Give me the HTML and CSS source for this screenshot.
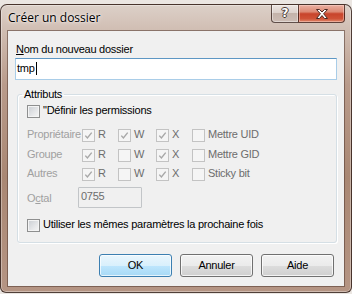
FILE: index.html
```html
<!DOCTYPE html>
<html lang="fr">
<head>
<meta charset="utf-8">
<title>Créer un dossier</title>
<link rel="stylesheet" href="styles.css">
</head>
<body>
<div class="window">
  <div class="titlebar">
    <span class="title">Créer un dossier</span>
    <div class="caption">
      <span class="cap cap-help">?</span>
      <span class="cap cap-close"><svg width="12" height="10" viewBox="0 0 12 10"><polygon points="0.5,0.5 3.5,0.5 6,3 8.5,0.5 11.5,0.5 7.6,4.75 11.5,9.5 8.5,9.5 6,6.6 3.5,9.5 0.5,9.5 4.4,4.75" fill="#fff" stroke="#4a2a24" stroke-width="1" stroke-linejoin="round"/></svg></span>
    </div>
  </div>
  <div class="client">
    <div class="name-label"><u>N</u>om du nouveau dossier</div>
    <div class="textbox">tmp<span class="caret"></span></div>
    <fieldset class="group">
      <legend>Attributs</legend>
      <div class="group-body">
        <div class="check"><span class="box"></span><span>"Définir les permissions</span></div>
        <div class="perms">
          <span class="plabel">Propriétaire</span>
          <div class="check dis"><span class="box"><svg width="11" height="11" viewBox="0 0 11 11"><path d="M2.3 5.6 L4.4 8 L8.7 2.6" fill="none" stroke="#a8a8a8" stroke-width="1.4"/></svg></span><span>R</span></div>
          <div class="check dis"><span class="box"><svg width="11" height="11" viewBox="0 0 11 11"><path d="M2.3 5.6 L4.4 8 L8.7 2.6" fill="none" stroke="#a8a8a8" stroke-width="1.4"/></svg></span><span>W</span></div>
          <div class="check dis"><span class="box"><svg width="11" height="11" viewBox="0 0 11 11"><path d="M2.3 5.6 L4.4 8 L8.7 2.6" fill="none" stroke="#a8a8a8" stroke-width="1.4"/></svg></span><span>X</span></div>
          <div class="check dis"><span class="box"></span><span>Mettre UID</span></div>

          <span class="plabel">Groupe</span>
          <div class="check dis"><span class="box"><svg width="11" height="11" viewBox="0 0 11 11"><path d="M2.3 5.6 L4.4 8 L8.7 2.6" fill="none" stroke="#a8a8a8" stroke-width="1.4"/></svg></span><span>R</span></div>
          <div class="check dis"><span class="box"></span><span>W</span></div>
          <div class="check dis"><span class="box"><svg width="11" height="11" viewBox="0 0 11 11"><path d="M2.3 5.6 L4.4 8 L8.7 2.6" fill="none" stroke="#a8a8a8" stroke-width="1.4"/></svg></span><span>X</span></div>
          <div class="check dis"><span class="box"></span><span>Mettre GID</span></div>

          <span class="plabel">Autres</span>
          <div class="check dis"><span class="box"><svg width="11" height="11" viewBox="0 0 11 11"><path d="M2.3 5.6 L4.4 8 L8.7 2.6" fill="none" stroke="#a8a8a8" stroke-width="1.4"/></svg></span><span>R</span></div>
          <div class="check dis"><span class="box"></span><span>W</span></div>
          <div class="check dis"><span class="box"><svg width="11" height="11" viewBox="0 0 11 11"><path d="M2.3 5.6 L4.4 8 L8.7 2.6" fill="none" stroke="#a8a8a8" stroke-width="1.4"/></svg></span><span>X</span></div>
          <div class="check dis"><span class="box"></span><span>Sticky bit</span></div>
        </div>
        <div class="octal-row">
          <span class="plabel octal-label">O<u>c</u>tal</span>
          <div class="octal-box">0755</div>
        </div>
        <div class="check last"><span class="box"></span><span>Utiliser les mêmes paramètres la prochaine fois</span></div>
      </div>
    </fieldset>
    <div class="buttons">
      <button class="btn default">OK</button>
      <button class="btn">Annuler</button>
      <button class="btn">Aide</button>
    </div>
  </div>
</div>
</body>
</html>
```

FILE: styles.css
```css
* { box-sizing: border-box; }
html, body { margin: 0; padding: 0; }
body {
  width: 352px;
  height: 294px;
  overflow: hidden;
  background: #ebe6e2;
  font-family: "Liberation Sans", Arial, sans-serif;
  font-size: 11px;
  line-height: 13px;
  letter-spacing: -0.25px;
  color: #000;
}

.window {
  width: 352px;
  height: 289px;
  margin-top: 4px;
  border: 1px solid rgba(45, 28, 22, 0.8);
  border-radius: 7px 7px 6px 6px;
  padding: 0 7px 6px;
  display: flex;
  flex-direction: column;
  background: linear-gradient(180deg, #dcd0c8 0, #d0bdb2 26px, #b99b8b 80px, #a98773 60%, #b59584 100%);
  box-shadow: inset 0 0 0 1px rgba(255, 255, 255, 0.35);
}

.titlebar {
  height: 26px;
  display: flex;
  justify-content: space-between;
  align-items: flex-start;
  margin-right: -1px;
}
.title {
  font-family: "Open Sans", "Noto Sans", sans-serif;
  font-size: 12px;
  line-height: 16px;
  letter-spacing: 0;
  padding-top: 5px;
  color: #000;
  text-shadow: 0 0 5px rgba(255, 255, 255, 0.9), 0 0 2px rgba(255, 255, 255, 0.8);
}
.caption {
  display: flex;
  height: 18px;
}
.cap {
  height: 18px;
  display: flex;
  align-items: center;
  justify-content: center;
  border: 1px solid rgba(50, 30, 25, 0.75);
  border-top: none;
}
.cap-help {
  width: 27px;
  border-right: none;
  border-radius: 0 0 0 4px;
  background: linear-gradient(180deg, #ece5e1 0, #ddd2cc 45%, #c4b3aa 50%, #cdbdb5 100%);
  box-shadow: inset 0 0 0 1px rgba(255, 255, 255, 0.4);
  font-family: "DejaVu Sans", sans-serif;
  font-weight: bold;
  font-size: 12px;
  letter-spacing: 0;
  color: #fff;
  text-shadow: 1px 0 0 #4a3a34, -1px 0 0 #4a3a34, 0 1px 0 #4a3a34, 0 -1px 0 #4a3a34;
}
.cap-close {
  width: 47px;
  border-radius: 0 0 4px 0;
  background: linear-gradient(180deg, #eab0a2 0, #dd8a74 40%, #c8442b 52%, #cf5236 80%, #e08a6e 100%);
  box-shadow: inset 0 0 0 1px rgba(255, 220, 210, 0.45);
}

.client {
  flex: 1;
  background: #f0f0f0;
  box-shadow: 0 0 0 1px rgba(80, 55, 45, 0.55);
  padding: 0 7px;
  display: flex;
  flex-direction: column;
}
.name-label {
  margin: 12px 0 0 1px;
}
.textbox {
  margin-top: 2px;
  height: 22px;
  background: #fff;
  border: 1px solid #a9cde8;
  border-top-color: #5e97c4;
  padding: 3px 0 0 1px;
  display: flex;
  align-items: flex-start;
}
.caret {
  width: 1px;
  height: 13px;
  margin-left: 1px;
  background: #000;
}

.group {
  margin: 8px 0 0 2px;
  padding: 0 0 11px 0;
  border: 1px solid #d5dfe5;
  border-radius: 3px;
  box-shadow: inset 1px 1px 0 #fff, 1px 1px 0 #fff;
  min-width: 0;
}
.group legend {
  margin-left: 4px;
  padding: 0 2px;
  line-height: 13px;
}
.group-body {
  padding: 3px 0 0 9px;
}

.check {
  display: flex;
  align-items: flex-start;
  gap: 3px;
  height: 13px;
  white-space: nowrap;
}
.box {
  flex: none;
  width: 13px;
  height: 13px;
  margin-top: 1px;
  border: 1px solid #8e8f8f;
  background: linear-gradient(135deg, #c9cdd2 0, #e6e7e9 60%, #f6f6f6 100%);
  box-shadow: inset 0 0 0 1px #f4f4f4;
  display: flex;
  align-items: center;
  justify-content: center;
}
.check.dis {
  color: #6d6d6d;
}
.check.dis .box {
  border-color: #c3c3c3;
  background: #f5f5f5;
  box-shadow: none;
}

.perms {
  display: grid;
  grid-template-columns: 55px 36px 38px 36px auto;
  grid-auto-rows: 13px;
  row-gap: 6.6px;
  margin-top: 11px;
}
.plabel {
  color: #a0a0a0;
  white-space: nowrap;
}

.octal-row {
  display: flex;
  align-items: center;
  margin-top: 7px;
  height: 21px;
}
.octal-label {
  width: 51px;
  padding-top: 1px;
}
.octal-box {
  width: 64px;
  height: 21px;
  border: 1px solid #c2c5c8;
  border-radius: 1px;
  background: #f0f0f0;
  color: #6d6d6d;
  padding: 2px 0 0 2px;
}
.check.last {
  margin-top: 10px;
}

.buttons {
  display: flex;
  justify-content: flex-end;
  gap: 8px;
  margin: 11px 3px 0 0;
}
.btn {
  width: 73px;
  height: 23px;
  padding: 0;
  font-family: "Liberation Sans", Arial, sans-serif;
  font-size: 11px;
  line-height: 13px;
  letter-spacing: -0.25px;
  color: #000;
  border: 1px solid #707070;
  border-radius: 3px;
  background: linear-gradient(180deg, #f2f2f2 0, #ebebeb 50%, #dddddd 50%, #cfcfcf 100%);
  box-shadow: inset 0 0 0 1px rgba(255, 255, 255, 0.75);
}
.btn.default {
  border-color: #3c7fb1;
  background: linear-gradient(180deg, #eaf6fd 0, #d9f0fc 50%, #bee6fd 50%, #a7d9f5 100%);
  box-shadow: inset 0 0 0 1px rgba(255, 255, 255, 0.7);
}
```
